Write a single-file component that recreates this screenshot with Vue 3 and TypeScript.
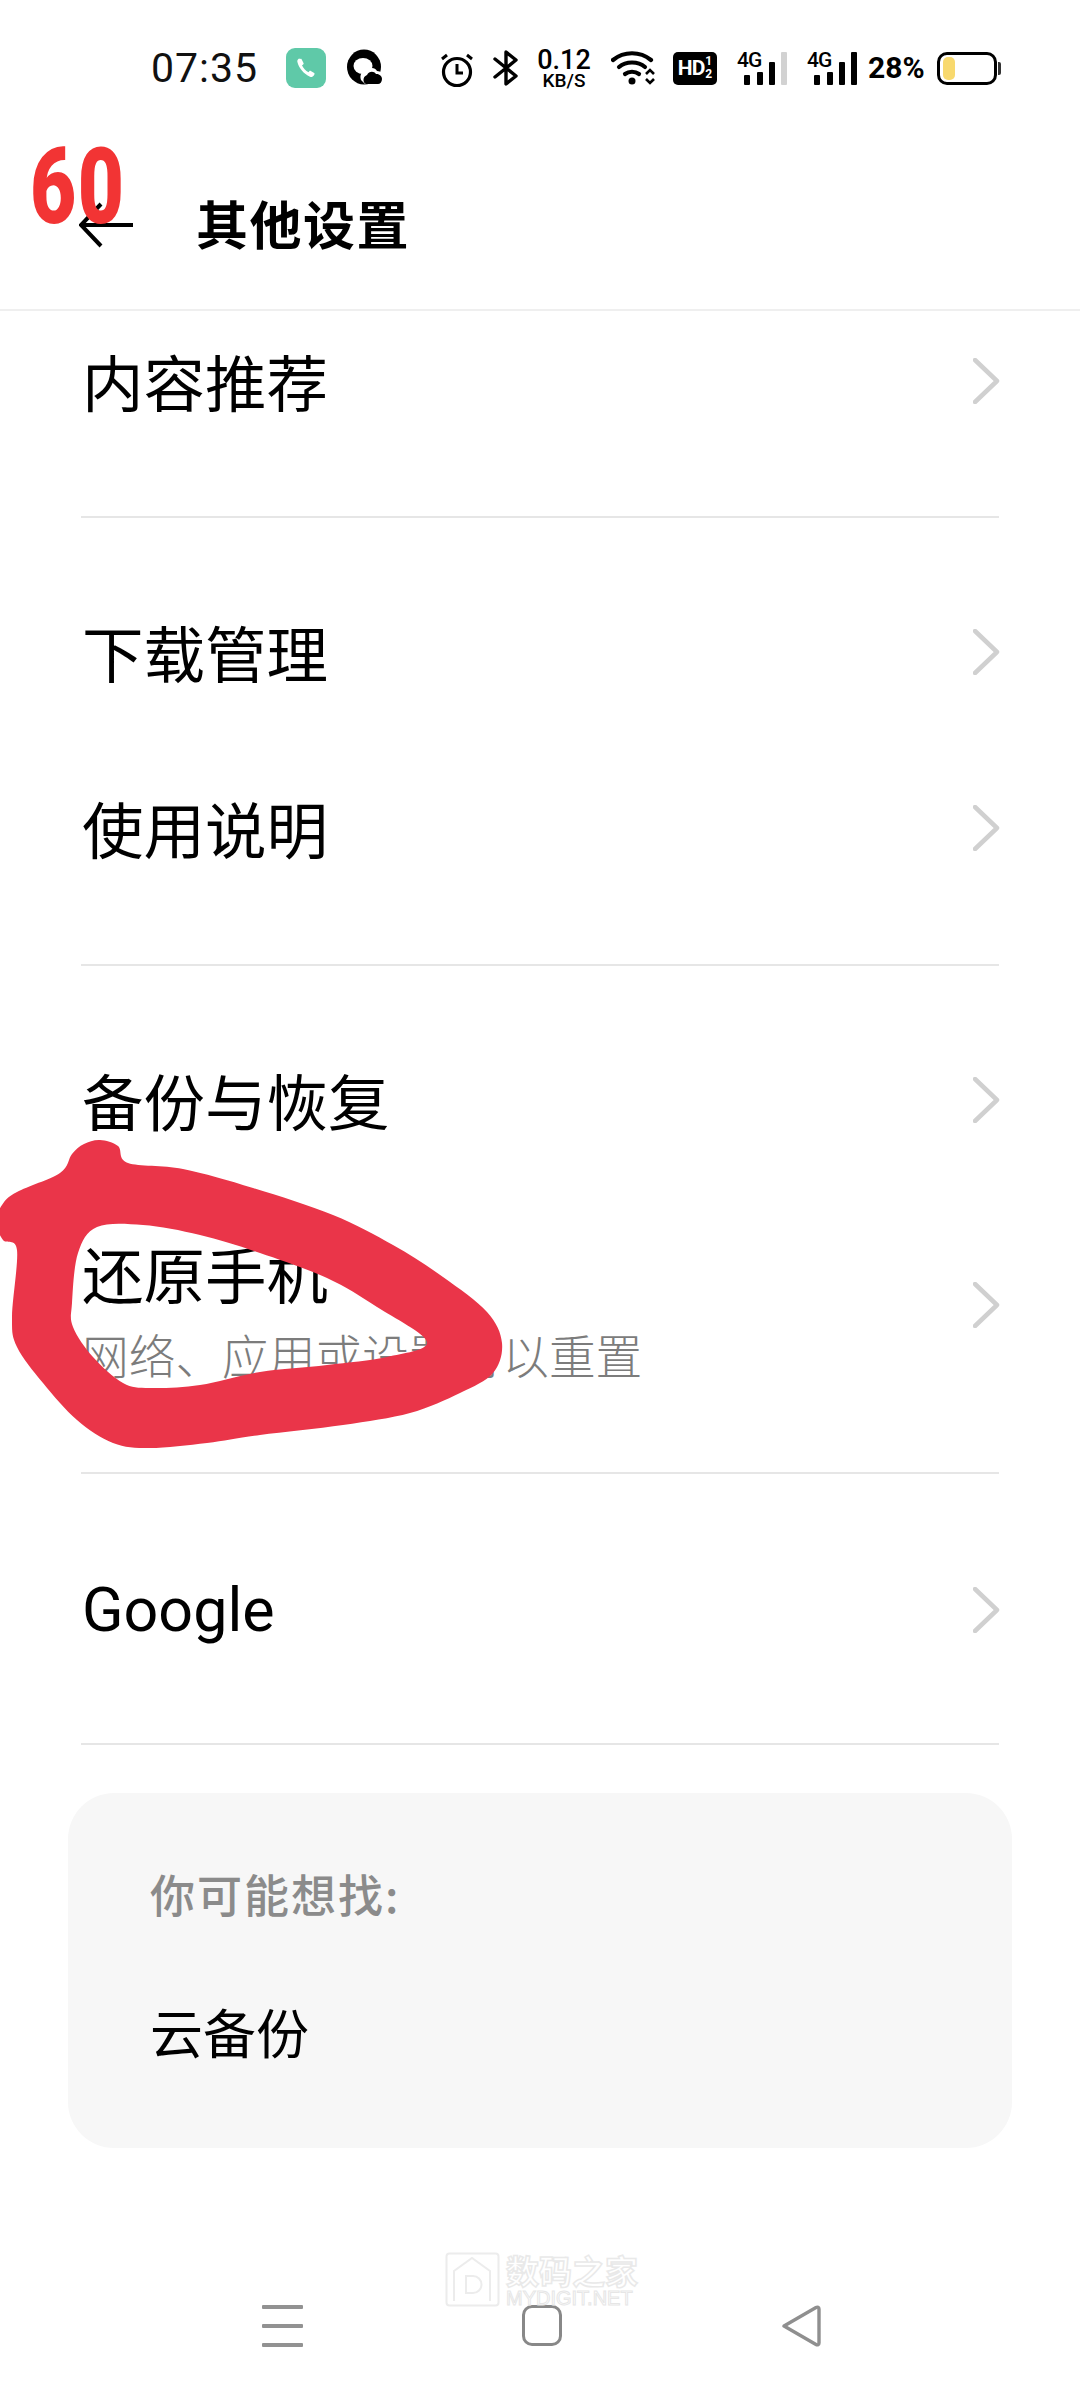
<script setup lang="ts">
type Pt = [number, number]

const outer: Pt[] = [[100,1140],[118,1146],[128,1163],[183,1169],[253,1188],[333,1215],[393,1245],[443,1277],[487,1312],[502,1343],[493,1373],[460,1393],[410,1413],[343,1425],[260,1435],[207,1443],[150,1448],[113,1443],[77,1420],[43,1383],[17,1347],[12,1317],[17,1250],[3,1240],[-4,1222],[2,1205],[17,1192],[60,1173],[72,1154],[84,1144]]
const inner: Pt[] = [[97,1227],[143,1225],[200,1235],[260,1253],[327,1278],[377,1307],[427,1342],[387,1357],[327,1365],[260,1372],[200,1385],[150,1388],[123,1383],[93,1357],[73,1327],[72,1303],[78,1253]]

function smooth(p: Pt[]): string {
  const n = p.length
  let d = `M${p[0][0]} ${p[0][1]}`
  for (let i = 0; i < n; i++) {
    const a = p[(i - 1 + n) % n], b = p[i], c = p[(i + 1) % n], e = p[(i + 2) % n]
    const c1x = b[0] + (c[0] - a[0]) / 6, c1y = b[1] + (c[1] - a[1]) / 6
    const c2x = c[0] - (e[0] - b[0]) / 6, c2y = c[1] - (e[1] - b[1]) / 6
    d += `C${c1x.toFixed(1)} ${c1y.toFixed(1)} ${c2x.toFixed(1)} ${c2y.toFixed(1)} ${c[0]} ${c[1]}`
  }
  return d + 'Z'
}
const scribble = smooth(outer) + smooth(inner)

interface Row { title: string; sub?: string }
const groups: Row[][] = [
  [{ title: '内容推荐' }],
  [{ title: '下载管理' }, { title: '使用说明' }],
  [{ title: '备份与恢复' }, { title: '还原手机', sub: '网络、应用或设置可以重置' }],
  [{ title: 'Google' }],
]
const sim = [
  { off: false },
  { off: true },
]
</script>

<template>
  <div class="phone">
    <div class="status">
      <span class="time">07:35</span>
      <svg class="i-phone" width="40" height="40" viewBox="0 0 40 40">
        <rect width="40" height="40" rx="9" fill="#5fc9a8" />
        <path d="M13 10.5c-1.2.7-2 2-1.6 3.6 1.4 6 6.4 12 12.6 14.6 1.6.6 3-.1 3.8-1.3l.6-1c.3-.5.2-1-.2-1.3l-3.4-2.2c-.4-.3-1-.2-1.3.2l-1 1.2c-2.8-1.2-5.400-4.200-6.500-7l1.200-.9c.4-.3.6-.9.3-1.300l-1.900-3.800c-.3-.5-.9-.6-1.300-.4z" fill="#fff" />
      </svg>
      <svg class="i-q" width="36" height="38" viewBox="0 0 36 38">
        <ellipse cx="17" cy="18" rx="17" ry="17.500" fill="#000" />
        <ellipse cx="16" cy="17" rx="9.500" ry="8" fill="#fff" />
        <path d="M14 31c-2-6 2-10 6-9 2-4 8-4 10 0 4 0 6 3 6 6s-2 7-5 7H18z" fill="#fff" />
        <path d="M19 35c-3-1-4-7 1-9 2-4 7-4 9-1 3-.5 6 2 6 5s-2 5-4 5z" fill="#000" />
      </svg>
      <svg class="i-alarm" width="34" height="36" viewBox="0 0 34 36">
        <circle cx="17" cy="20" r="13.500" fill="none" stroke="#000" stroke-width="3.200" />
        <path d="M17 12v9h6M2 7l5-4M32 7l-5-4" fill="none" stroke="#000" stroke-width="3" />
      </svg>
      <svg class="i-bt" width="26" height="36" viewBox="0 0 26 36">
        <path d="M2 9l21 17-10 8V2l10 8L2 27" fill="none" stroke="#000" stroke-width="3.400" stroke-linejoin="round" stroke-linecap="round" />
      </svg>
      <div class="speed">
        <span class="speed-num">0.12</span>
        <span class="speed-unit">KB/S</span>
      </div>
      <svg class="i-wifi" width="45" height="36" viewBox="0 0 45 36">
        <g fill="none" stroke="#000" stroke-width="4.200" stroke-linecap="round">
          <path d="M2 10c11-9 27-9 38 0" />
          <path d="M8 17c7-6 19-6 26 0" />
          <path d="M14 24c4-3 10-3 14 0" />
        </g>
        <circle cx="21" cy="31" r="3.500" fill="#000" />
        <path d="M35 24l4-4 4 4M35 29l4 4 4-4" fill="none" stroke="#000" stroke-width="2.600" />
      </svg>
      <div class="hd"><span class="hd-main">HD</span><span class="hd-frac"><i>1</i><i>2</i></span></div>
      <div v-for="(s, i) in sim" :key="i" class="sim">
        <span class="g4">4G</span>
        <span class="bar b1"></span>
        <span class="bar b2"></span>
        <span class="bar b3"></span>
        <span class="bar b4" :class="{ dim: !s.off }"></span>
      </div>
      <span class="pct">28%</span>
      <div class="battery"><span class="fill"></span></div>
      <span class="nub"></span>
    </div>

    <header class="head">
      <svg class="back" width="54" height="46" viewBox="0 0 54 46">
        <path d="M22 2L2 23l20 21M2 23h52" fill="none" stroke="#000" stroke-width="4" />
      </svg>
      <h1 class="title">其他设置</h1>
    </header>

    <main class="content">
      <div class="scroller">
        <section v-for="(g, gi) in groups" :key="gi" class="group">
          <div v-for="r in g" :key="r.title" class="row" :class="{ tall: r.sub }">
            <div class="texts">
              <div class="row-title" :class="{ latin: r.title === 'Google' }">{{ r.title }}</div>
              <div v-if="r.sub" class="row-sub">{{ r.sub }}</div>
            </div>
            <svg class="chev" width="28" height="46" viewBox="0 0 28 46">
              <path d="M2 2L24 23 2 44" fill="none" stroke="#d0d0d0" stroke-width="4.500" stroke-linecap="round" stroke-linejoin="round" />
            </svg>
          </div>
        </section>
        <section class="card">
          <div class="card-label">你可能想找:</div>
          <div class="card-item">云备份</div>
        </section>
      </div>
    </main>

    <nav class="nav">
      <div class="menu"><span></span><span></span><span></span></div>
      <span class="home"></span>
      <svg class="tri" width="40" height="42" viewBox="0 0 40 42">
        <path d="M3 21L35 2.500c1.500-.9 3-.2 3 1.500v34c0 1.700-1.500 2.400-3 1.500z" fill="none" stroke="#8f8f8f" stroke-width="3.400" stroke-linejoin="round" />
      </svg>
    </nav>

    <span class="sixty">60</span>
    <svg class="scribble" width="520" height="330" viewBox="0 1130 520 330">
      <path :d="scribble" fill="#ea3549" fill-rule="evenodd" />
    </svg>
    <div class="mark">
      <svg width="55" height="55" viewBox="0 0 55 55">
        <rect x="1.500" y="1.500" width="52" height="52" rx="3" fill="none" stroke="#ececec" stroke-width="2" />
        <path d="M9 49V19L27 6l18 13v30" fill="none" stroke="#ececec" stroke-width="2" />
        <path d="M21 24h7a8 8 0 010 17h-7z" fill="none" stroke="#ececec" stroke-width="2" />
      </svg>
      <div class="mark-text">
        <span class="mark-cn">数码之家</span>
        <span class="mark-en">MYDIGIT.NET</span>
      </div>
    </div>
  </div>
</template>

<style>
html, body { margin: 0; background: #fff; }
</style>

<style scoped>
.phone {
  position: relative;
  width: 1080px;
  height: 2400px;
  background: #fff;
  overflow: hidden;
  display: flex;
  flex-direction: column;
  font-family: "Noto Sans CJK SC", "Noto Sans", sans-serif;
  color: #000;
}
.status {
  height: 136px;
  flex: none;
  display: flex;
  align-items: center;
  padding-left: 151px;
  box-sizing: border-box;
}
.time {
  font: 400 41px/1 Roboto, sans-serif;
  letter-spacing: 1px;
  width: 135px;
  color: #111;
}
.i-phone { flex: none; }
.i-q { flex: none; margin-left: 21px; }
.i-alarm { flex: none; margin-left: 57px; margin-top: 4px; }
.i-bt { flex: none; margin-left: 19px; }
.speed {
  display: flex;
  flex-direction: column;
  align-items: center;
  width: 52px;
  margin-left: 19px;
  font-family: Roboto, sans-serif;
}
.speed-num { font-size: 27px; font-weight: 500; line-height: 24px; height: 24px; }
.speed-unit { font-size: 19px; font-weight: 500; line-height: 17px; height: 17px; }
.i-wifi { flex: none; margin-left: 21px; }
.hd {
  flex: none;
  margin-left: 17px;
  width: 44px;
  height: 33px;
  border-radius: 5px;
  background: #000;
  color: #fff;
  display: flex;
  align-items: center;
  justify-content: center;
  gap: 1px;
  font-family: Roboto, sans-serif;
  font-weight: 700;
}
.hd-main { font-size: 21px; letter-spacing: -1px; }
.hd-frac { display: flex; flex-direction: column; font-size: 12px; line-height: 13px; }
.hd-frac i { font-style: normal; }
.sim {
  position: relative;
  flex: none;
  width: 50px;
  height: 33px;
  margin-left: 20px;
}
.g4 {
  position: absolute;
  left: 0;
  top: -2px;
  font: 500 21px/1 Roboto, sans-serif;
  letter-spacing: -1px;
}
.bar { position: absolute; bottom: 0; width: 6px; background: #000; border-radius: 1px; }
.b1 { left: 7px; height: 10px; }
.b2 { left: 20px; height: 13px; }
.b3 { left: 32px; height: 23px; }
.b4 { left: 44px; height: 33px; }
.b4.dim { background: #d2d2d2; }
.pct {
  flex: none;
  margin-left: 11px;
  font: 700 30px/1 Roboto, sans-serif;
  width: 60px;
}
.battery {
  flex: none;
  margin-left: 9px;
  width: 60px;
  height: 33px;
  box-sizing: border-box;
  border: 3.500px solid #000;
  border-radius: 10px;
  padding: 2px 3px;
}
.fill {
  display: block;
  width: 12px;
  height: 100%;
  background: #f8d96e;
  border-radius: 5px;
}
.nub { flex: none; width: 3px; height: 13px; margin-left: 1px; background: #333; border-radius: 0 2px 2px 0; }

.head {
  height: 175px;
  flex: none;
  box-sizing: border-box;
  border-bottom: 2px solid #efefef;
  display: flex;
  align-items: flex-start;
  padding-left: 79px;
  position: relative;
  z-index: 1;
  background: #fff;
}
.back { flex: none; margin-top: 66px; }
.title {
  margin: 57px 0 0 63px;
  font-size: 52px;
  line-height: 60px;
  font-weight: 700;
  letter-spacing: 1.500px;
}

.content { flex: 1; min-height: 0; overflow: hidden; }
.scroller { margin-top: -18px; }
.group {
  margin: 0 81px;
  border-bottom: 2px solid #e6e6e6;
}
.group:nth-of-type(1) { padding: 0 0 47px; }
.group:nth-of-type(2) { padding: 46px 0 48px; }
.group:nth-of-type(3) { padding: 46px 0 50px; }
.group:nth-of-type(4) { padding: 48px 0 45px; }
.row {
  height: 176px;
  display: flex;
  align-items: center;
  justify-content: space-between;
  margin-right: -2px;
}
.row.tall { height: 234px; }
.row.tall .texts { padding-top: 8px; }
.texts { min-width: 0; }
.row-title { font-size: 61.500px; line-height: 76px; padding-left: 1px; }
.row-title.latin { font-family: Roboto, sans-serif; font-size: 61px; padding-left: 1px; }
.row-sub { font-size: 46.700px; line-height: 60px; margin-top: 13px; color: #7c7c7c; padding-left: 1px; font-weight: 300; }
.chev { flex: none; }

.card {
  margin: 48px 68px 0;
  height: 355px;
  box-sizing: border-box;
  padding: 70px 82px 0;
  border-radius: 46px;
  background: #f7f7f7;
}
.card-label { font-size: 45px; line-height: 62px; font-weight: 500; color: #8b8b8b; letter-spacing: 2px; }
.card-item { margin-top: 75px; font-size: 53px; line-height: 62px; }

.nav {
  flex: none;
  height: 125px;
  box-sizing: border-box;
  padding: 30px 0 0 262px;
  display: flex;
  align-items: flex-start;
  gap: 219px;
  position: relative;
}
.menu { flex: none; width: 41px; display: flex; flex-direction: column; gap: 15px; }
.menu span { display: block; height: 4px; background: #929292; border-radius: 1px; }
.home {
  flex: none;
  width: 40px;
  height: 41px;
  box-sizing: border-box;
  border: 3.500px solid #888;
  border-radius: 10px;
}
.tri { flex: none; }

.sixty {
  position: absolute;
  left: 30px;
  top: 133px;
  font: 900 105px/110px Roboto, sans-serif;
  color: #f23434;
  letter-spacing: 2px;
  transform: scaleX(0.76);
  transform-origin: left top;
  z-index: 2;
}
.scribble { position: absolute; left: 0; top: 1130px; z-index: 3; }
.mark {
  position: absolute;
  left: 445px;
  top: 2252px;
  display: flex;
  gap: 6px;
}
.mark-text { display: flex; flex-direction: column; }
.mark-cn {
  font-size: 33px;
  line-height: 36px;
  font-weight: 700;
  color: #fff;
  -webkit-text-stroke: 1.500px #e9e9e9;
  white-space: nowrap;
}
.mark-en {
  font: 400 20px/20px "Liberation Sans", sans-serif;
  color: #fff;
  -webkit-text-stroke: 1px #e6e6e6;
  white-space: nowrap;
}
</style>
